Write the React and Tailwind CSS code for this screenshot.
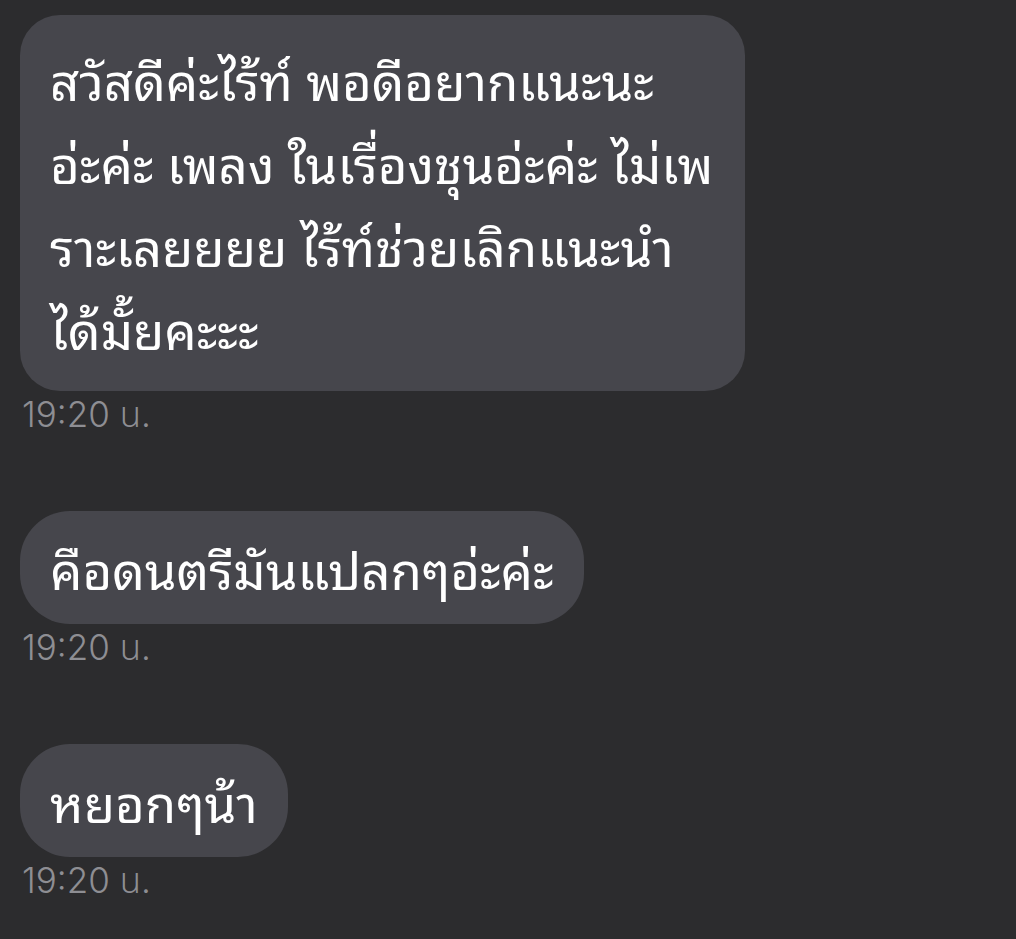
export default function App() {
  const messages = [
    {
      lines: [
        'สวัสดีค่ะไร้ท์ พอดีอยากแนะนะ',
        'อ่ะค่ะ เพลง ในเรื่องชุนอ่ะค่ะ ไม่เพ',
        'ราะเลยยยย ไร้ท์ช่วยเลิกแนะนำ',
        'ได้มั้ยคะะะ'
      ],
      time: '19:20 น.'
    },
    { lines: ['คือดนตรีมันแปลกๆอ่ะค่ะ'], time: '19:20 น.' },
    { lines: ['หยอกๆน้า'], time: '19:20 น.' }
  ]

  return (
    <div className="min-h-[939px] w-[1016px] bg-[#2c2c2e] pt-[15px] pl-[20px] overflow-hidden">
      <div className="flex flex-col gap-[79px]">
        {messages.map((m, i) => (
          <div key={i} className="flex flex-col items-start">
            <div
              className={`bg-[#46464c] text-white text-[51px] font-['Noto_Sans_Thai_Looped','Loma','Garuda','Noto_Sans_Thai',sans-serif] ${
                m.lines.length > 1
                  ? 'rounded-[40px] w-[725px] px-[30px] py-[22px] leading-[83px]'
                  : 'rounded-[50px] px-[30px] py-[16px] leading-[81px]'
              }`}
            >
              {m.lines.map((line, j) => (
                <div key={j} className="whitespace-nowrap">{line}</div>
              ))}
            </div>
            <div className="mt-[5px] pl-[2px] text-[35px] leading-[36px] font-light text-[#8e8e93] font-['Inter','Noto_Sans_Thai',sans-serif]">
              {m.time}
            </div>
          </div>
        ))}
      </div>
    </div>
  )
}
